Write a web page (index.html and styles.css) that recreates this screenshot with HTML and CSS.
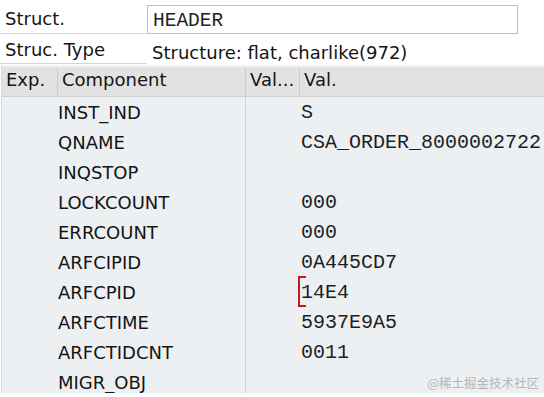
FILE: index.html
```html
<!DOCTYPE html>
<html lang="en">
<head>
    <meta charset="UTF-8">
    <meta name="viewport" content="width=device-width, initial-scale=1.0">
    <title>Structure HEADER</title>
    <link rel="stylesheet" href="styles.css">
</head>
<body>
    <div class="fields">
        <div class="field-label">Struct.</div>
        <div class="field-value"><div class="input-box">HEADER</div></div>
        <div class="field-label second">Struc. Type</div>
        <div class="field-value type-text">Structure: flat, charlike(972)</div>
    </div>

    <div class="grid">
        <div class="grid-head">
            <div class="head-cell">Exp.</div>
            <div class="head-cell">Component</div>
            <div class="head-cell">Val...</div>
            <div class="head-cell">Val.</div>
        </div>
        <div class="grid-body">
            <div class="row"><div class="exp"></div><div class="comp">INST_IND</div><div class="short"></div><div class="val">S</div></div>
            <div class="row"><div class="exp"></div><div class="comp">QNAME</div><div class="short"></div><div class="val">CSA_ORDER_8000002722</div></div>
            <div class="row"><div class="exp"></div><div class="comp">INQSTOP</div><div class="short"></div><div class="val"></div></div>
            <div class="row"><div class="exp"></div><div class="comp">LOCKCOUNT</div><div class="short"></div><div class="val">000</div></div>
            <div class="row"><div class="exp"></div><div class="comp">ERRCOUNT</div><div class="short"></div><div class="val">000</div></div>
            <div class="row"><div class="exp"></div><div class="comp">ARFCIPID</div><div class="short"></div><div class="val">0A445CD7</div></div>
            <div class="row"><div class="exp"></div><div class="comp">ARFCPID</div><div class="short"></div><div class="val cursor">14E4</div></div>
            <div class="row"><div class="exp"></div><div class="comp">ARFCTIME</div><div class="short"></div><div class="val">5937E9A5</div></div>
            <div class="row"><div class="exp"></div><div class="comp">ARFCTIDCNT</div><div class="short"></div><div class="val">0011</div></div>
            <div class="row"><div class="exp"></div><div class="comp">MIGR_OBJ</div><div class="short"></div><div class="val"></div></div>
        </div>
        <div class="watermark">@稀土掘金技术社区</div>
    </div>
</body>
</html>
```

FILE: styles.css
```css
body {
    margin: 0;
    padding: 0;
    background-color: #ffffff;
    font-family: "DejaVu Sans", Verdana, sans-serif;
    font-size: 18px;
    color: #141414;
    overflow: hidden;
}

/* Top fields */
.fields {
    display: grid;
    grid-template-columns: 147px 1fr;
    grid-template-rows: 34px 30px;
}

.field-label {
    padding-left: 5px;
    padding-top: 5px;
    line-height: 28px;
    border-bottom: 1px solid #d4d4d4;
    white-space: nowrap;
}

.field-label.second {
    padding-top: 2px;
    line-height: 27px;
}

.field-label + .field-value {
    padding-top: 5px;
}

.input-box {
    width: 371px;
    height: 29px;
    border: 1px solid #bdbdbd;
    box-sizing: border-box;
    padding-left: 5px;
    padding-top: 2px;
    font-family: "Liberation Mono", monospace;
    font-size: 19.5px;
    line-height: 26px;
    color: #222;
}

.type-text {
    padding-left: 5px;
    padding-top: 2px;
    line-height: 27px;
    white-space: nowrap;
}

/* Table */
.grid {
    position: relative;
    margin-top: 1px;
    margin-left: 1px;
    height: 328px;
    overflow: hidden;
    background-color: #edf0f2;
    border-left: 1px solid #d6d8da;
}

.grid-head,
.row {
    display: grid;
    grid-template-columns: 56px 188px 54px 1fr;
}

.grid-head {
    height: 32px;
    background-color: #e2e2e2;
    border-top: 2px solid #f2f2f2;
    border-bottom: 1px solid #cfcfcf;
    box-sizing: border-box;
}

.head-cell {
    padding-left: 4px;
    line-height: 26px;
    border-right: 1px solid #cbcbcb;
    white-space: nowrap;
}

.head-cell:last-child {
    border-right: none;
}

.row {
    height: 30px;
    line-height: 31px;
}

.comp {
    border-right: 1px solid #d0d3d6;
}

.short {
    grid-column: 3;
}

.val {
    grid-column: 4;
    padding-left: 1px;
    font-family: "Liberation Mono", monospace;
    font-size: 20px;
    color: #1e1e1e;
    white-space: nowrap;
}

.cursor {
    position: relative;
}

/* red cursor bracket in front of the value */
.cursor::before {
    content: "";
    position: absolute;
    left: -2px;
    top: -1px;
    width: 8px;
    height: 31px;
    border: 2px solid #c41c1c;
    border-right: none;
    box-sizing: border-box;
}

.watermark {
    position: absolute;
    right: 5px;
    bottom: 1px;
    font-family: "Noto Sans CJK SC", sans-serif;
    font-size: 12.5px;
    color: #b4b6b8;
}
```
